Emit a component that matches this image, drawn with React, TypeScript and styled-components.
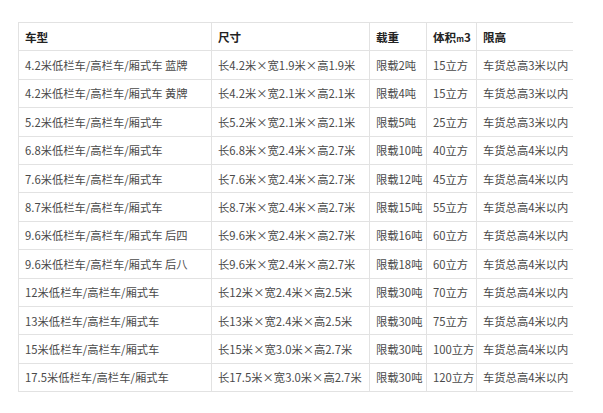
import React from "react";
import styled, { createGlobalStyle } from "styled-components";

const GlobalStyle = createGlobalStyle`
  body {
    margin: 0;
    background: #fff;
    font-family: "Noto Sans CJK SC", "Liberation Sans", sans-serif;
  }
`;

const Page = styled.div`
  padding: 22px 0 0 18px;
`;

const Table = styled.table`
  border-collapse: collapse;
  table-layout: fixed;
  width: 554px;
  font-size: 11.3px;
  color: #4a4a4a;
`;

const Col = styled.col<{ $w: number }>`
  width: ${p => p.$w}px;
`;

const Row = styled.tr`
  height: 28.4px;
  border-top: 1px solid #e2e2e2;
  border-bottom: 1px solid #e2e2e2;
`;

const Th = styled.th`
  text-align: left;
  font-weight: bold;
  color: #222;
  padding: 0 6px;
  border-left: 1px solid #e2e2e2;
  white-space: nowrap;
  font-size: 11.6px;
`;

const Td = styled.td`
  padding: 0 6px;
  border-left: 1px solid #e2e2e2;
  white-space: nowrap;
  overflow: hidden;
`;

const Unit = styled.span`
  font-size: 8px;
`;

type Truck = [string, string, string, string, string];

const headings = ["车型", "尺寸", "载重", "体积", "限高"];
const widths = [193, 158, 57, 50, 96];

const rows: Truck[] = [
  ["4.2米低栏车/高栏车/厢式车 蓝牌", "长4.2米×宽1.9米×高1.9米", "限载2吨", "15立方", "车货总高3米以内"],
  ["4.2米低栏车/高栏车/厢式车 黄牌", "长4.2米×宽2.1米×高2.1米", "限载4吨", "15立方", "车货总高3米以内"],
  ["5.2米低栏车/高栏车/厢式车", "长5.2米×宽2.1米×高2.1米", "限载5吨", "25立方", "车货总高3米以内"],
  ["6.8米低栏车/高栏车/厢式车", "长6.8米×宽2.4米×高2.7米", "限载10吨", "40立方", "车货总高4米以内"],
  ["7.6米低栏车/高栏车/厢式车", "长7.6米×宽2.4米×高2.7米", "限载12吨", "45立方", "车货总高4米以内"],
  ["8.7米低栏车/高栏车/厢式车", "长8.7米×宽2.4米×高2.7米", "限载15吨", "55立方", "车货总高4米以内"],
  ["9.6米低栏车/高栏车/厢式车 后四", "长9.6米×宽2.4米×高2.7米", "限载16吨", "60立方", "车货总高4米以内"],
  ["9.6米低栏车/高栏车/厢式车 后八", "长9.6米×宽2.4米×高2.7米", "限载18吨", "60立方", "车货总高4米以内"],
  ["12米低栏车/高栏车/厢式车", "长12米×宽2.4米×高2.5米", "限载30吨", "70立方", "车货总高4米以内"],
  ["13米低栏车/高栏车/厢式车", "长13米×宽2.4米×高2.5米", "限载30吨", "75立方", "车货总高4米以内"],
  ["15米低栏车/高栏车/厢式车", "长15米×宽3.0米×高2.7米", "限载30吨", "100立方", "车货总高4米以内"],
  ["17.5米低栏车/高栏车/厢式车", "长17.5米×宽3.0米×高2.7米", "限载30吨", "120立方", "车货总高4米以内"],
];

const App: React.FC = () => (
  <Page>
    <GlobalStyle />
    <Table>
      <colgroup>
        {widths.map((w, i) => <Col key={i} $w={w} />)}
      </colgroup>
      <thead>
        <Row>
          {headings.map((h, i) =>
            <Th key={i}>{h}{i === 3 && <><Unit>m</Unit>3</>}</Th>
          )}
        </Row>
      </thead>
      <tbody>
        {rows.map((r, i) => (
          <Row key={i}>
            {r.map((c, j) => <Td key={j}>{c}</Td>)}
          </Row>
        ))}
      </tbody>
    </Table>
  </Page>
);

export default App;
